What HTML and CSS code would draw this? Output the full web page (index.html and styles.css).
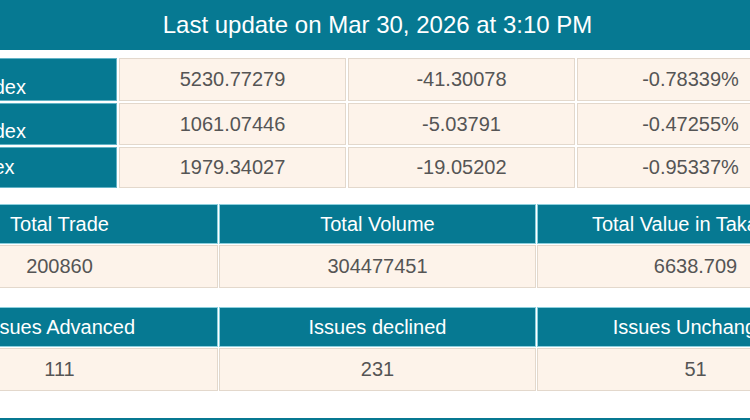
FILE: index.html
```html
<!DOCTYPE html>
<html lang="en">
<head>
<meta charset="utf-8">
<title>Market Summary</title>
<link rel="stylesheet" href="styles.css">
</head>
<body>
<div class="page">
  <div class="update">Last update on Mar 30, 2026 at 3:10 PM</div>

  <table class="idx">
    <colgroup>
      <col class="c-name"><col class="c-val"><col class="c-val"><col class="c-val">
    </colgroup>
    <tr>
      <th class="name low">DSEX Index</th>
      <td>5230.77279</td>
      <td>-41.30078</td>
      <td>-0.78339%</td>
    </tr>
    <tr>
      <th class="name low">DSES Index</th>
      <td>1061.07446</td>
      <td>-5.03791</td>
      <td>-0.47255%</td>
    </tr>
    <tr>
      <th class="name short">DS30 Index</th>
      <td>1979.34027</td>
      <td>-19.05202</td>
      <td>-0.95337%</td>
    </tr>
  </table>

  <table class="stats first">
    <tr>
      <th>Total Trade</th>
      <th>Total Volume</th>
      <th>Total Value in Taka(mn)</th>
    </tr>
    <tr>
      <td>200860</td>
      <td>304477451</td>
      <td>6638.709</td>
    </tr>
  </table>

  <table class="stats second">
    <tr>
      <th>Issues Advanced</th>
      <th>Issues declined</th>
      <th>Issues Unchanged</th>
    </tr>
    <tr>
      <td>111</td>
      <td>231</td>
      <td>51</td>
    </tr>
  </table>

  <div class="next"></div>
</div>
</body>
</html>
```

FILE: styles.css
```css
html, body {
  margin: 0;
  padding: 0;
  background: #ffffff;
  overflow: hidden;
}

body {
  font-family: "Liberation Sans", Arial, sans-serif;
  color: #555555;
}

.page {
  width: 955px;
  margin-left: -100px;
}

.update {
  height: 50px;
  background: #067992;
  color: #ffffff;
  font-size: 24px;
  display: flex;
  align-items: center;
  justify-content: center;
}

table {
  border-collapse: separate;
  font-size: 20px;
  table-layout: fixed;
}

th, td {
  padding: 0;
  font-weight: normal;
  text-align: center;
  vertical-align: middle;
}

th {
  background: #067992;
  color: #ffffff;
  border: 1px solid #62b3c6;
}

td {
  background: #fdf3ea;
  color: #555555;
  border: 1px solid #e3d8cc;
}

/* index table */
.idx {
  margin-top: 6px;
  border-spacing: 2px;
  width: 904px;
}

.idx .c-name { width: 215px; }
.idx .c-val { width: 227px; }

.idx th, .idx td {
  height: 39px;
}

.idx tr:first-child th,
.idx tr:first-child td {
  height: 40px;
}

.idx th.name {
  text-align: left;
  padding-left: 14px;
}

.idx th.short {
  padding-left: 7px;
}

.idx th.low {
  vertical-align: bottom;
  padding-bottom: 1px;
}

/* stats tables */
.stats {
  width: 955px;
  border-spacing: 1px;
}

.stats.first { margin-top: 13px; }
.stats.second { margin-top: 17px; }

.stats th {
  height: 38px;
  border-color: #8ccfdd;
}

.stats td {
  height: 41px;
}

.next {
  margin-top: 26px;
  height: 30px;
  background: #067992;
}
```
